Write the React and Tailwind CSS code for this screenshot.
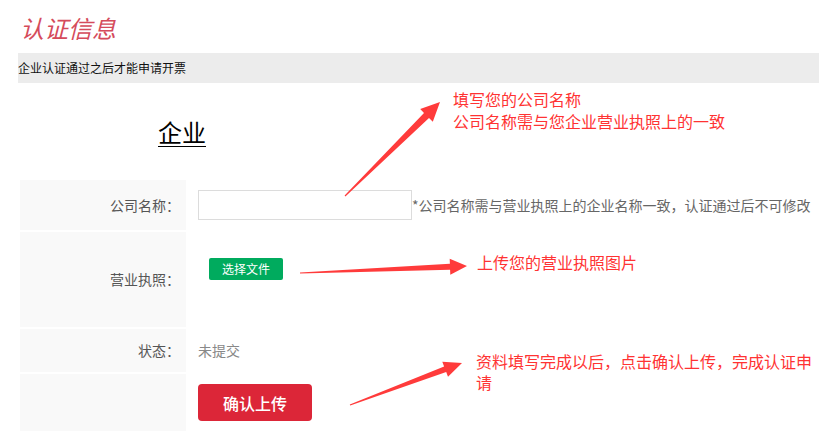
import React from "react";

const arrowPoints = (x1, y1, x2, y2, len, half, w1, w0 = 1) => {
  const dx = x2 - x1;
  const dy = y2 - y1;
  const d = Math.hypot(dx, dy);
  const ux = dx / d;
  const uy = dy / d;
  const nx = -uy;
  const ny = ux;
  const bx = x2 - ux * len;
  const by = y2 - uy * len;
  const pts = [
    [x1 + (nx * w0) / 2, y1 + (ny * w0) / 2],
    [bx + (nx * w1) / 2, by + (ny * w1) / 2],
    [bx + nx * half, by + ny * half],
    [x2, y2],
    [bx - nx * half, by - ny * half],
    [bx - (nx * w1) / 2, by - (ny * w1) / 2],
    [x1 - (nx * w0) / 2, y1 - (ny * w0) / 2],
  ];
  return pts.map((p) => p.map((v) => v.toFixed(1)).join(",")).join(" ");
};

const arrows = [
  [345, 196, 440, 102, 19, 9, 7],
  [300, 273, 467, 266, 17, 8, 6],
  [350, 405, 462, 363, 18, 8, 6],
];

const font = { fontFamily: '"Noto Sans CJK SC", "Noto Sans", sans-serif' };

const App = () => {
  return (
    <div className="relative w-[819px] h-[444px] bg-white overflow-hidden" style={font}>
      <h1 className="pl-[20px] pt-[12px] h-[53px] text-[24px] leading-[32px] italic text-[#d54b5b] font-normal">
        认证信息
      </h1>

      <div className="ml-[18px] h-[30px] bg-[#ececec] flex items-center text-[12px] text-[#111]">
        企业认证通过之后才能申请开票
      </div>

      <div className="h-[97px] flex items-center pl-[158px]">
        <span className="text-[24px] leading-[30px] underline underline-offset-[4px] decoration-1 text-black">
          企业
        </span>
      </div>

      <div className="ml-[20px] flex flex-col gap-[2px] text-[14px]">
        <div className="flex h-[50px]">
          <div className="w-[166px] bg-[#f9f9f9] flex items-center justify-end pr-[6px] text-[#555]">
            公司名称：
          </div>
          <div className="flex items-center pl-[12px]">
            <input
              type="text"
              className="w-[214px] h-[30px] border border-[#dcdcdc] outline-none"
            />
            <span className="text-[#666] whitespace-nowrap">
              *公司名称需与营业执照上的企业名称一致，认证通过后不可修改
            </span>
          </div>
        </div>

        <div className="flex h-[95px]">
          <div className="w-[166px] bg-[#f9f9f9] flex items-center justify-end pr-[6px] text-[#555]">
            营业执照：
          </div>
          <div className="pl-[23px] pt-[26px]">
            <button className="w-[74px] h-[22px] rounded-[2px] bg-[#00ab5e] text-white text-[12px] leading-[22px]">
              选择文件
            </button>
          </div>
        </div>

        <div className="flex h-[43px]">
          <div className="w-[166px] bg-[#f9f9f9] flex items-center justify-end pr-[6px] text-[#555]">
            状态：
          </div>
          <div className="flex items-center pl-[12px] text-[#888]">未提交</div>
        </div>

        <div className="flex h-[57px]">
          <div className="w-[166px] bg-[#f9f9f9]"></div>
          <div className="pl-[12px] pt-[10px]">
            <button className="w-[114px] h-[37px] rounded-[4px] bg-[#dc2638] text-white text-[16px] font-medium">
              确认上传
            </button>
          </div>
        </div>
      </div>

      <svg className="absolute left-0 top-0 pointer-events-none" width="819" height="444">
        {arrows.map((a, i) => (
          <polygon key={i} points={arrowPoints(...a)} fill="#ff3b3b" />
        ))}
      </svg>

      <div className="absolute left-[453px] top-[88px] text-[16px] leading-[22px] text-[#ff3333]">
        <div>填写您的公司名称</div>
        <div>公司名称需与您企业营业执照上的一致</div>
      </div>
      <div className="absolute left-[477px] top-[251px] text-[16px] leading-[22px] text-[#ff3333]">
        上传您的营业执照图片
      </div>
      <div className="absolute left-[476px] top-[351px] w-[340px] text-[16px] leading-[21px] text-[#ff3333]">
        资料填写完成以后，点击确认上传，完成认证申请
      </div>
    </div>
  );
};

export default App;
